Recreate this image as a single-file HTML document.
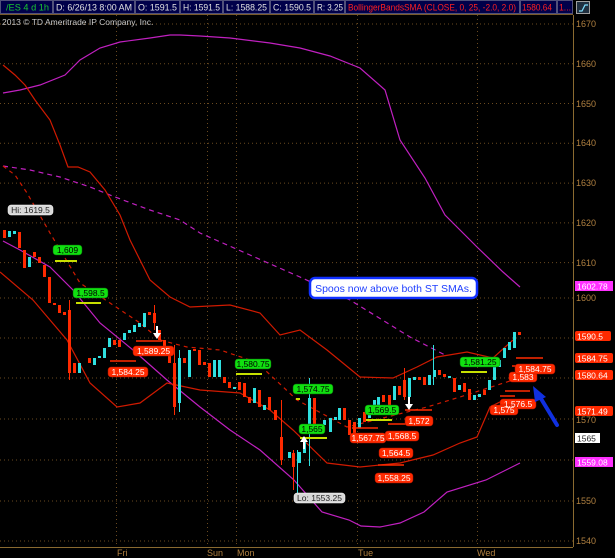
<!DOCTYPE html>
<html><head><meta charset="utf-8"><style>
html,body{margin:0;padding:0;background:#000;width:615px;height:558px;overflow:hidden}
svg{display:block;font-family:"Liberation Sans",sans-serif}
</style></head><body>
<svg width="615" height="558" viewBox="0 0 615 558" xmlns="http://www.w3.org/2000/svg">
<rect width="615" height="558" fill="#000"/>
<!-- top bar -->
<g font-size="9">
<rect x="0" y="0" width="573" height="14" fill="#00004a"/>
<g fill="none" stroke="#50507a" stroke-width="1">
<rect x="0.5" y="0.5" width="52" height="13"/><rect x="53.5" y="0.5" width="81" height="13"/>
<rect x="135.5" y="0.5" width="44" height="13"/><rect x="180.5" y="0.5" width="42" height="13"/>
<rect x="223.5" y="0.5" width="46" height="13"/><rect x="270.5" y="0.5" width="43" height="13"/>
<rect x="314.5" y="0.5" width="30" height="13"/><rect x="345.5" y="0.5" width="174" height="13"/>
<rect x="520.5" y="0.5" width="36" height="13"/><rect x="557.5" y="0.5" width="15" height="13"/>
</g>
<text x="6" y="10.5" fill="#19c830" textLength="43" lengthAdjust="spacingAndGlyphs">/ES 4 d 1h</text>
<text x="56" y="10.5" fill="#e0e0e0" textLength="76" lengthAdjust="spacingAndGlyphs">D: 6/26/13 8:00 AM</text>
<text x="138" y="10.5" fill="#e0e0e0" textLength="39" lengthAdjust="spacingAndGlyphs">O: 1591.5</text>
<text x="183" y="10.5" fill="#e0e0e0" textLength="37" lengthAdjust="spacingAndGlyphs">H: 1591.5</text>
<text x="226" y="10.5" fill="#e0e0e0" textLength="41" lengthAdjust="spacingAndGlyphs">L: 1588.25</text>
<text x="273" y="10.5" fill="#e0e0e0" textLength="38" lengthAdjust="spacingAndGlyphs">C: 1590.5</text>
<text x="317" y="10.5" fill="#e0e0e0" textLength="26" lengthAdjust="spacingAndGlyphs">R: 3.25</text>
<text x="348" y="10.5" fill="#ff2020" textLength="168" lengthAdjust="spacingAndGlyphs">BollingerBandsSMA (CLOSE, 0, 25, -2.0, 2.0)</text>
<text x="522" y="10.5" fill="#ff2020" textLength="30" lengthAdjust="spacingAndGlyphs">1580.64</text>
<text x="559" y="10.5" fill="#ff2020" textLength="12" lengthAdjust="spacingAndGlyphs">1...</text>
</g>
<line x1="0" y1="14.5" x2="573" y2="14.5" stroke="#7a5a2a"/>
<rect x="576.5" y="1.5" width="13" height="12" fill="#203040" stroke="#a0a0a0"/>
<path d="M579 11 L582 11 L585 5 L588 5" stroke="#80e0ff" fill="none" stroke-width="1.2"/>
<!-- grid -->
<g stroke="#6a4a20" stroke-width="1" stroke-dasharray="1,3">
<line x1="0" y1="24" x2="573" y2="24"/><line x1="0" y1="63.8" x2="573" y2="63.8"/>
<line x1="0" y1="103.5" x2="573" y2="103.5"/><line x1="0" y1="143.3" x2="573" y2="143.3"/>
<line x1="0" y1="183.1" x2="573" y2="183.1"/><line x1="0" y1="222.9" x2="573" y2="222.9"/>
<line x1="0" y1="262.6" x2="573" y2="262.6"/><line x1="0" y1="298" x2="573" y2="298"/>
<line x1="0" y1="338" x2="573" y2="338"/><line x1="0" y1="378" x2="573" y2="378"/>
<line x1="0" y1="419" x2="573" y2="419"/><line x1="0" y1="460" x2="573" y2="460"/>
<line x1="0" y1="501" x2="573" y2="501"/><line x1="0" y1="541" x2="573" y2="541"/>
<line x1="116.5" y1="15" x2="116.5" y2="546"/><line x1="207.5" y1="15" x2="207.5" y2="546"/>
<line x1="236.5" y1="15" x2="236.5" y2="546"/><line x1="357.5" y1="15" x2="357.5" y2="546"/>
<line x1="477.5" y1="15" x2="477.5" y2="546"/>
</g>
<text x="2" y="25" fill="#c8c8c8" font-size="8.5">2013 © TD Ameritrade IP Company, Inc.</text>
<!-- axes -->
<line x1="573.5" y1="15" x2="573.5" y2="547" stroke="#8a6a30"/>
<line x1="0" y1="547.5" x2="573" y2="547.5" stroke="#8a6a30"/>
<g fill="#b08040" font-size="9">
<text x="576" y="27">1670</text><text x="576" y="67">1660</text><text x="576" y="107">1650</text>
<text x="576" y="146">1640</text><text x="576" y="186">1630</text><text x="576" y="226">1620</text>
<text x="576" y="266">1610</text><text x="576" y="301">1600</text><text x="576" y="423">1570</text>
<text x="576" y="504">1550</text><text x="576" y="544">1540</text>
<text x="117" y="556">Fri</text><text x="207" y="556">Sun</text><text x="237" y="556">Mon</text>
<text x="358" y="556">Tue</text><text x="477" y="556">Wed</text>
</g>
<!-- lines -->
<g fill="none" stroke-width="1.2">
<polyline stroke="#c020c0" points="3,93 20,90 40,85 65,75 80,60 100,48 120,42 150,38 170,35 180,35 200,36 230,38 270,43 300,48 330,56 360,68 385,90 400,140 425,178 445,215 477,247 503,272 520,287"/>
<polyline stroke="#c020c0" points="3,241 20,250 50,267 73,290 100,323 133,350 167,380 200,407 230,430 260,450 294,480 322,512 349,520 361,526 380,527 400,523 424,512 447,492 486,480 520,463"/>
<polyline stroke="#c020c0" stroke-dasharray="5,4" points="3,166 30,170 60,177 90,187 115,197 150,210 180,220 200,233 250,255 300,277 350,300 410,337 445,355"/>
<polyline stroke="#d01a00" points="3,65 15,75 25,85 35,100 50,120 60,145 68,167 78,167 90,172 105,190 120,215 130,240 150,280 170,297 190,307 230,305 260,313 280,335 300,330 327,350 360,377 393,378 417,367 437,357 467,352 493,358 513,340"/>
<polyline stroke="#d01a00" points="0,272 33,300 67,340 90,383 117,407 140,403 167,383 200,390 240,393 270,410 293,430 327,463 360,467 400,463 433,455 460,443 477,437 490,407 500,402 513,400"/>
<polyline stroke="#d01a00" stroke-dasharray="4,4" points="3,166 15,175 27,193 50,233 80,283 110,303 140,323 160,340 187,347 220,350 250,360 265,370 297,400 347,427 427,407 460,397 513,380"/>
</g>
<!-- candles -->
<g>
<g fill="#ff2a00">
<rect x="3" y="230" width="3" height="8"/><rect x="18" y="232" width="3" height="16"/><rect x="23" y="250" width="3" height="18"/>
<rect x="33" y="252" width="3" height="5"/><rect x="38" y="257" width="3" height="6"/><rect x="43" y="265" width="3" height="12"/>
<rect x="48" y="277" width="3" height="26"/><rect x="53" y="303" width="3" height="2"/><rect x="58" y="305" width="3" height="8"/>
<rect x="63" y="312" width="3" height="3"/><rect x="68" y="310" width="3" height="63"/><rect x="73" y="363" width="3" height="10"/>
<rect x="88" y="358" width="3" height="5"/><rect x="113" y="340" width="3" height="5"/><rect x="118" y="340" width="3" height="7"/>
<rect x="148" y="312" width="3" height="3"/><rect x="153" y="313" width="3" height="10"/><rect x="158" y="330" width="3" height="10"/>
<rect x="163" y="340" width="3" height="7"/><rect x="168" y="355" width="3" height="8"/><rect x="173" y="363" width="3" height="44"/>
<rect x="183" y="358" width="3" height="5"/><rect x="193" y="349" width="3" height="2"/><rect x="198" y="350" width="3" height="15"/>
<rect x="203" y="362" width="3" height="3"/><rect x="208" y="363" width="3" height="14"/><rect x="223" y="377" width="3" height="6"/>
<rect x="228" y="382" width="3" height="6"/><rect x="238" y="382" width="3" height="8"/><rect x="243" y="383" width="3" height="14"/>
<rect x="248" y="397" width="3" height="6"/><rect x="258" y="390" width="3" height="17"/><rect x="268" y="397" width="3" height="13"/>
<rect x="274" y="410" width="3" height="10"/><rect x="280" y="437" width="3" height="23"/><rect x="292" y="453" width="3" height="14"/>
<rect x="313" y="398" width="3" height="35"/><rect x="318" y="427" width="3" height="5"/><rect x="343" y="408" width="3" height="12"/>
<rect x="348" y="420" width="3" height="15"/><rect x="353" y="422" width="3" height="15"/><rect x="363" y="412" width="3" height="10"/>
<rect x="382" y="395" width="3" height="7"/><rect x="388" y="395" width="3" height="12"/><rect x="398" y="386" width="3" height="9"/>
<rect x="403" y="380" width="3" height="17"/><rect x="418" y="377" width="3" height="3"/><rect x="423" y="377" width="3" height="8"/>
<rect x="438" y="370" width="3" height="5"/><rect x="443" y="374" width="3" height="3"/><rect x="453" y="378" width="3" height="14"/>
<rect x="463" y="383" width="3" height="9"/><rect x="468" y="389" width="3" height="11"/><rect x="483" y="390" width="3" height="5"/>
<rect x="518" y="332" width="3" height="3"/>
</g>
<g fill="#30e0e0">
<rect x="8" y="231" width="3" height="6"/><rect x="13" y="231" width="3" height="3"/><rect x="28" y="257" width="3" height="10"/>
<rect x="78" y="363" width="3" height="10"/><rect x="93" y="358" width="3" height="7"/><rect x="98" y="356" width="3" height="2"/>
<rect x="103" y="348" width="3" height="10"/><rect x="108" y="338" width="3" height="9"/><rect x="123" y="333" width="3" height="7"/>
<rect x="128" y="330" width="3" height="3"/><rect x="133" y="325" width="3" height="7"/><rect x="138" y="323" width="3" height="4"/>
<rect x="143" y="313" width="3" height="14"/><rect x="178" y="358" width="3" height="45"/><rect x="188" y="350" width="3" height="27"/>
<rect x="213" y="360" width="3" height="17"/><rect x="218" y="360" width="3" height="17"/><rect x="233" y="387" width="3" height="2"/>
<rect x="253" y="388" width="3" height="15"/><rect x="263" y="405" width="3" height="5"/><rect x="288" y="452" width="3" height="6"/>
<rect x="298" y="452" width="3" height="11"/><rect x="303" y="440" width="3" height="13"/><rect x="308" y="398" width="3" height="35"/>
<rect x="323" y="420" width="3" height="5"/><rect x="329" y="418" width="3" height="14"/><rect x="334" y="417" width="3" height="3"/>
<rect x="338" y="408" width="3" height="12"/><rect x="358" y="418" width="3" height="10"/><rect x="368" y="405" width="3" height="13"/>
<rect x="373" y="400" width="3" height="10"/><rect x="377" y="397" width="3" height="13"/><rect x="393" y="386" width="3" height="14"/>
<rect x="408" y="378" width="3" height="19"/><rect x="413" y="377" width="3" height="3"/><rect x="428" y="375" width="3" height="10"/>
<rect x="433" y="370" width="3" height="7"/><rect x="448" y="376" width="3" height="2"/><rect x="458" y="385" width="3" height="5"/>
<rect x="473" y="395" width="3" height="5"/><rect x="478" y="394" width="3" height="3"/><rect x="488" y="380" width="3" height="10"/>
<rect x="493" y="367" width="3" height="13"/><rect x="498" y="360" width="3" height="7"/><rect x="503" y="348" width="3" height="10"/>
<rect x="508" y="342" width="3" height="8"/><rect x="513" y="332" width="3" height="16"/>
</g>
<g stroke-width="1">
<line x1="69.5" y1="300" x2="69.5" y2="380" stroke="#ff2a00"/><line x1="174.5" y1="345" x2="174.5" y2="415" stroke="#ff2a00"/>
<line x1="281.5" y1="400" x2="281.5" y2="465" stroke="#ff2a00"/><line x1="293.5" y1="450" x2="293.5" y2="490" stroke="#ff2a00"/>
<line x1="179.5" y1="350" x2="179.5" y2="412" stroke="#30e0e0"/><line x1="309.5" y1="378" x2="309.5" y2="466" stroke="#30e0e0"/>
<line x1="297.5" y1="450" x2="297.5" y2="496" stroke="#30e0e0"/><line x1="433.5" y1="345" x2="433.5" y2="385" stroke="#30e0e0"/>
<line x1="404.5" y1="368" x2="404.5" y2="400" stroke="#ff2a00"/><line x1="154.5" y1="305" x2="154.5" y2="330" stroke="#ff2a00"/>
</g>
</g>
<!-- marker lines -->
<g stroke="#c8e000" stroke-width="2">
<line x1="55" y1="261" x2="77" y2="261"/><line x1="76" y1="303" x2="101" y2="303"/>
<line x1="236" y1="374" x2="262" y2="374"/><line x1="296" y1="399" x2="300" y2="399"/>
<line x1="366" y1="420" x2="392" y2="420"/><line x1="300" y1="438" x2="327" y2="438"/>
<line x1="461" y1="372" x2="487" y2="372"/>
</g>
<g stroke="#ff2a00" stroke-width="1.5">
<line x1="110" y1="361" x2="136" y2="361"/><line x1="136" y1="341" x2="162" y2="341"/>
<line x1="352" y1="428" x2="378" y2="428"/><line x1="388" y1="424" x2="412" y2="424"/>
<line x1="405" y1="410" x2="432" y2="410"/><line x1="378" y1="465" x2="404" y2="465"/>
<line x1="500" y1="396" x2="515" y2="396"/><line x1="505" y1="391" x2="530" y2="391"/>
<line x1="512" y1="366" x2="538" y2="366"/><line x1="516" y1="358" x2="543" y2="358"/>
</g>
<!-- white arrows -->
<g fill="#fff">
<rect x="156" y="326" width="2" height="8"/><path d="M153 333 L161 333 L157 339 Z"/>
<rect x="303" y="441" width="2" height="8"/><path d="M300 442 L308 442 L304 436 Z"/>
<rect x="408" y="397" width="2" height="8"/><path d="M405 404 L413 404 L409 410 Z"/>
</g>
<!-- labels -->
<g font-size="8.5" text-anchor="middle">
<g fill="#10e010" stroke="#0a600a" stroke-width="0.5">
<rect x="53" y="245" width="29" height="10" rx="3"/><rect x="73" y="288" width="35" height="10" rx="3"/>
<rect x="235" y="359" width="36" height="10" rx="3"/><rect x="293" y="384" width="40" height="10" rx="3"/>
<rect x="365" y="405" width="34" height="10" rx="3"/><rect x="299" y="424" width="26" height="10" rx="3"/>
<rect x="460" y="357" width="40" height="10" rx="3"/>
</g>
<g fill="#000">
<text x="67.5" y="253">1,609</text><text x="90.5" y="296">1,598.5</text><text x="253" y="367">1,580.75</text>
<text x="313" y="392">1,574.75</text><text x="382" y="413">1,569.5</text><text x="312" y="432">1,565</text>
<text x="480" y="365">1,581.25</text>
</g>
<g fill="#ff2a00" stroke="#a01000" stroke-width="0.5">
<rect x="133" y="346" width="41" height="10" rx="3"/><rect x="108" y="367" width="40" height="10" rx="3"/>
<rect x="350" y="433" width="36" height="10" rx="3"/><rect x="385" y="431" width="34" height="10" rx="3"/>
<rect x="405" y="416" width="28" height="10" rx="3"/><rect x="379" y="448" width="34" height="10" rx="3"/>
<rect x="375" y="473" width="38" height="10" rx="3"/><rect x="500" y="399" width="36" height="10" rx="3"/>
<rect x="490" y="405" width="28" height="10" rx="3"/><rect x="509" y="372" width="28" height="10" rx="3"/>
<rect x="515" y="364" width="40" height="10" rx="3"/>
</g>
<g fill="#fff">
<text x="153.5" y="354">1,589.25</text><text x="128" y="375">1,584.25</text><text x="368" y="441">1,567.75</text>
<text x="402" y="439">1,568.5</text><text x="419" y="424">1,572</text><text x="396" y="456">1,564.5</text>
<text x="394" y="481">1,558.25</text><text x="518" y="407">1,576.5</text><text x="504" y="413">1,575</text>
<text x="523" y="380">1,583</text><text x="535" y="372">1,584.75</text>
</g>
<rect x="8" y="205" width="45" height="10" rx="3" fill="#d8d8d8" stroke="#fff" stroke-width="0.5"/>
<text x="30.5" y="213" fill="#222">Hi: 1619.5</text>
<rect x="294" y="493" width="51" height="10" rx="3" fill="#d8d8d8" stroke="#fff" stroke-width="0.5"/>
<text x="319.5" y="501" fill="#222">Lo: 1553.25</text>
</g>
<!-- right axis labels -->
<g font-size="8.5">
<rect x="575" y="281" width="38" height="10" fill="#ff30ff"/><text x="577" y="289.5" fill="#fff">1602.78</text>
<rect x="575" y="331" width="36" height="10" rx="2" fill="#ff2a00"/><text x="577" y="339.5" fill="#fff">1590.5</text>
<rect x="575" y="353" width="38" height="10" rx="2" fill="#ff2a00"/><text x="577" y="361.5" fill="#fff">1584.75</text>
<rect x="575" y="370" width="38" height="10" rx="2" fill="#ff2a00"/><text x="577" y="378.5" fill="#fff">1580.64</text>
<rect x="575" y="406" width="38" height="10" rx="2" fill="#ff2a00"/><text x="577" y="414.5" fill="#fff">1571.49</text>
<rect x="575" y="433" width="25" height="10" fill="#fff"/><text x="577" y="441.5" fill="#222">1565</text>
<rect x="575" y="457" width="38" height="10" fill="#ff30ff"/><text x="577" y="465.5" fill="#fff">1559.08</text>
</g>
<!-- callout -->
<rect x="310" y="278" width="167" height="20" rx="5" fill="#fff" stroke="#1030ff" stroke-width="2.5"/>
<text x="393.5" y="292" text-anchor="middle" fill="#2040ff" font-size="10.5">Spoos now above both ST SMAs.</text>
<!-- blue arrow -->
<line x1="557" y1="425" x2="540" y2="397" stroke="#1030e0" stroke-width="4" stroke-linecap="round"/>
<path d="M533 386 L546 397 L535 402 Z" fill="#1030e0"/>
</svg>
</body></html>
